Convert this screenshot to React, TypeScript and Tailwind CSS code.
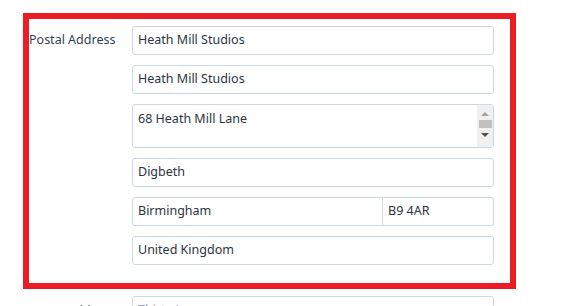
const font = { fontFamily: '"Noto Sans", "Open Sans", sans-serif' };

function Field({ value, className = '' }: { value: string; className?: string }) {
  return (
    <div className={`h-[29px] flex items-center px-[5px] border border-[#cdd7e1] rounded-[3px] bg-white text-[12.5px] text-[#2c3440] ${className}`}>
      {value}
    </div>
  );
}

export default function App() {
  return (
    <div className="w-[577px] h-[306px] overflow-hidden bg-white" style={font}>
      <div className="pt-[13px] pl-[23px]">
        <div className="w-[493px] border-[6px] border-[#ec1c24] pt-[7px] pb-[18px] flex">
          <div className="w-[103px] pt-[5px] text-[12.5px] text-[#34404f]">Postal Address</div>
          <div className="w-[362px] flex flex-col gap-[10px]">
            <Field value="Heath Mill Studios" />
            <Field value="Heath Mill Studios" />
            <div className="h-[44px] flex border border-[#cdd7e1] rounded-[3px] bg-white text-[12.5px] text-[#2c3440]">
              <div className="flex-1 px-[5px] pt-[5px]">68 Heath Mill Lane</div>
              <div className="w-[16px] bg-[#f0f0f0] flex flex-col items-center pt-[7px]">
                <div className="w-0 h-0 border-l-[4px] border-r-[4px] border-b-[4px] border-l-transparent border-r-transparent border-b-[#a3a3a3]" />
                <div className="w-[13px] h-[8px] bg-[#c1c1c1] mt-[4px]" />
                <div className="w-0 h-0 mt-[5px] border-l-[4px] border-r-[4px] border-t-[4px] border-l-transparent border-r-transparent border-t-[#505050]" />
              </div>
            </div>
            <Field value="Digbeth" />
            <div className="flex">
              <Field value="Birmingham" className="w-[251px] rounded-r-none" />
              <Field value="B9 4AR" className="flex-1 rounded-l-none border-l-0" />
            </div>
            <Field value="United Kingdom" />
          </div>
        </div>
      </div>
      <div className="flex pt-[7px] pl-[29px]">
        <div className="w-[103px] pt-[6px] text-[12.5px] text-[#34404f]">Street Address</div>
        <Field value="Thirty Lane" className="w-[362px] text-[#9aa3ad]" />
      </div>
    </div>
  );
}
